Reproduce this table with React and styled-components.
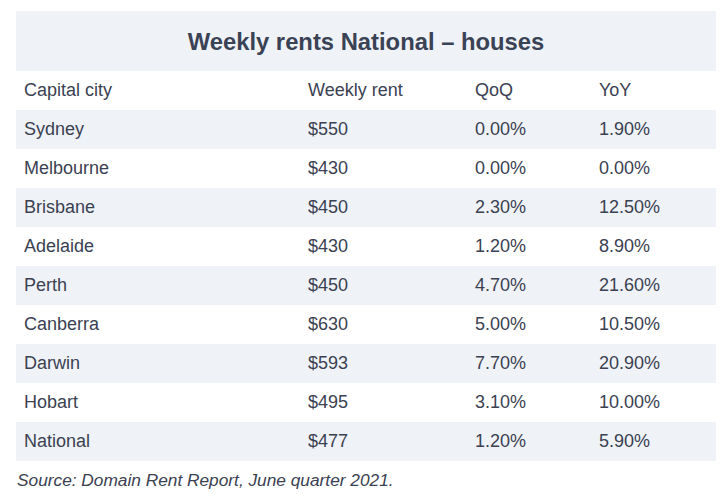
import React from "react"
import styled, { createGlobalStyle } from "styled-components"

const GlobalStyle = createGlobalStyle`
  body {
    margin: 0;
    background: #ffffff;
    font-family: "Liberation Sans", Arial, sans-serif;
    color: #3b4152;
  }
`

const rows = [
  ["Sydney", "$550", "0.00%", "1.90%"],
  ["Melbourne", "$430", "0.00%", "0.00%"],
  ["Brisbane", "$450", "2.30%", "12.50%"],
  ["Adelaide", "$430", "1.20%", "8.90%"],
  ["Perth", "$450", "4.70%", "21.60%"],
  ["Canberra", "$630", "5.00%", "10.50%"],
  ["Darwin", "$593", "7.70%", "20.90%"],
  ["Hobart", "$495", "3.10%", "10.00%"],
  ["National", "$477", "1.20%", "5.90%"],
]

const Page = styled.div`
  padding: 11px 0 0 16px;
`

const Table = styled.div`
  width: 700px;
`

const Title = styled.div`
  height: 60px;
  display: flex;
  align-items: center;
  justify-content: center;
  background: #eff3f7;
  font-weight: 700;
  font-size: 23.8px;
  color: #3a4255;
  padding-top: 2px;
  box-sizing: border-box;
`

const Row = styled.div`
  display: grid;
  grid-template-columns: 284px 167px 124px 1fr;
  height: 39px;
  align-items: center;
  background: ${(p) => (p.$shaded ? "#eff3f7" : "#ffffff")};
  font-size: 18px;
`

const Cell = styled.div`
  padding-left: 8px;
  white-space: nowrap;
`

const Source = styled.div`
  font-style: italic;
  font-size: 17.3px;
  padding: 9px 0 0 1px;
  color: #3b4152;
`

export default function App() {
  return (
    <Page>
      <GlobalStyle />
      <Table>
        <Title>Weekly rents National – houses</Title>
        <Row>
          <Cell>Capital city</Cell>
          <Cell>Weekly rent</Cell>
          <Cell>QoQ</Cell>
          <Cell>YoY</Cell>
        </Row>
        {rows.map((r, i) => (
          <Row key={r[0]} $shaded={i % 2 === 0}>
            {r.map((c, j) => (
              <Cell key={j}>{c}</Cell>
            ))}
          </Row>
        ))}
      </Table>
      <Source>Source: Domain Rent Report, June quarter 2021.</Source>
    </Page>
  )
}
